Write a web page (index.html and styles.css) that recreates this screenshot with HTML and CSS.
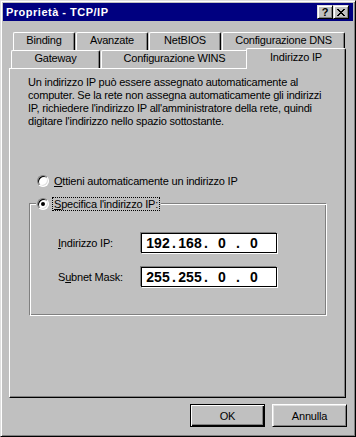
FILE: index.html
```html
<!DOCTYPE html>
<html lang="it">
<head>
<meta charset="utf-8">
<title>Proprietà - TCP/IP</title>
<link rel="stylesheet" href="styles.css">
</head>
<body>
<div class="window">
  <div class="titlebar">
    <span class="title">Proprietà - TCP/IP</span>
    <div class="caption-btns">
      <button class="cap-btn help" type="button">?</button>
      <button class="cap-btn close" type="button" aria-label="Chiudi">
        <svg width="8" height="7" viewBox="0 0 8 7" shape-rendering="crispEdges"><path fill="#000" d="M0 0h2v1H0zM6 0h2v1H6zM1 1h2v1H1zM5 1h2v1H5zM2 2h4v1H2zM3 3h2v1H3zM2 4h4v1H2zM1 5h2v1H1zM5 5h2v1H5zM0 6h2v1H0zM6 6h2v1H6z"/></svg>
      </button>
    </div>
  </div>
  <div class="body">
    <div class="tabs">
      <div class="tabrow back">
        <div class="tab t-binding">Binding</div>
        <div class="tab t-avanzate">Avanzate</div>
        <div class="tab t-netbios">NetBIOS</div>
        <div class="tab t-dns">Configurazione DNS</div>
      </div>
      <div class="tabrow front">
        <div class="tab t-gateway">Gateway</div>
        <div class="tab t-wins">Configurazione WINS</div>
        <div class="tab t-ip sel">Indirizzo IP</div>
      </div>
    </div>
    <div class="panel">
      <p class="intro">Un indirizzo IP può essere assegnato automaticamente al<br>computer. Se la rete non assegna automaticamente gli indirizzi<br>IP, richiedere l'indirizzo IP all'amministratore della rete, quindi<br>digitare l'indirizzo nello spazio sottostante.</p>
      <div class="radio-row">
        <span class="radio"></span>
        <span class="rlabel"><u>O</u>ttieni automaticamente un indirizzo IP</span>
      </div>
      <div class="group">
        <div class="legend">
          <span class="radio checked"></span>
          <span class="rlabel focus"><u>S</u>pecifica l'indirizzo IP:</span>
        </div>
        <div class="field first">
          <span class="flabel"><u>I</u>ndirizzo IP:</span>
          <div class="ipbox"><span class="oct">192</span><span class="dot">.</span><span class="oct">168</span><span class="dot">.</span><span class="oct">0</span><span class="dot">.</span><span class="oct">0</span></div>
        </div>
        <div class="field second">
          <span class="flabel">S<u>u</u>bnet Mask:</span>
          <div class="ipbox"><span class="oct">255</span><span class="dot">.</span><span class="oct">255</span><span class="dot">.</span><span class="oct">0</span><span class="dot">.</span><span class="oct">0</span></div>
        </div>
      </div>
    </div>
    <div class="buttons">
      <button class="btn default" type="button">OK</button>
      <button class="btn" type="button">Annulla</button>
    </div>
  </div>
</div>
</body>
</html>
```
FILE: styles.css
```css
* { box-sizing: border-box; }
html, body { margin: 0; padding: 0; background: #c0c0c0; }
body {
  font-family: "Liberation Sans", Arial, sans-serif;
  font-size: 11px;
  letter-spacing: -0.2px;
  color: #000;
}
.window {
  width: 356px;
  height: 437px;
  background: #c0c0c0;
  border: 1px solid;
  border-color: #dfdfdf #000 #000 #dfdfdf;
  box-shadow: inset 1px 1px #fff, inset -1px -1px #808080;
  padding: 2px;
  display: flex;
  flex-direction: column;
}
.titlebar {
  height: 18px;
  flex: none;
  background: #000080;
  display: flex;
  align-items: center;
  justify-content: space-between;
  padding: 0 4px 0 3px;
}
.title {
  color: #fff;
  font-weight: bold;
  font-size: 11px;
  letter-spacing: 0.5px;
  line-height: 18px;
  white-space: nowrap;
}
.caption-btns { display: flex; }
.cap-btn {
  width: 16px;
  height: 14px;
  padding: 0;
  margin: 0;
  background: #c0c0c0;
  border: 1px solid;
  border-color: #dfdfdf #000 #000 #dfdfdf;
  box-shadow: inset 1px 1px #fff, inset -1px -1px #808080;
  display: flex;
  align-items: center;
  justify-content: center;
  font: bold 11px "Liberation Sans", Arial, sans-serif;
  letter-spacing: 0;
  line-height: 12px;
  color: #000;
}
.cap-btn svg { display: block; }
.body {
  flex: 1;
  padding: 0 6px;
  display: flex;
  flex-direction: column;
}
.tabs {
  margin-top: 11px;
  height: 36px;
  flex: none;
}
.tabrow { display: flex; height: 18px; }
.tabrow.back { padding-left: 4px; }
.tabrow.front { padding-left: 2px; align-items: flex-end; }
.tab {
  height: 18px;
  background: #c0c0c0;
  border-top: 1px solid #fff;
  border-left: 1px solid #fff;
  border-right: 1px solid #000;
  box-shadow: inset -1px 0 #808080;
  border-radius: 2px 2px 0 0;
  text-align: center;
  line-height: 15px;
  white-space: nowrap;
  flex: none;
}
.t-binding { width: 62px; margin-right: 1px; }
.t-avanzate { width: 72px; margin-right: 1px; }
.t-netbios { width: 72px; margin-right: 1px; }
.t-dns { width: 123px; }
.t-gateway { width: 89px; margin-right: 1px; }
.t-wins { width: 147px; }
.tab.sel {
  width: 100px;
  height: 21px;
  margin-left: -2px;
  margin-bottom: -1px;
  padding-top: 1px;
  position: relative;
  z-index: 1;
}
.panel {
  width: 337px;
  height: 330px;
  flex: none;
  border: 1px solid;
  border-color: #fff #000 #000 #fff;
  box-shadow: inset -1px -1px #808080;
  padding: 7px 0 0 18px;
}
.intro {
  margin: 0;
  line-height: 13px;
  white-space: nowrap;
}
.radio-row {
  display: flex;
  align-items: center;
  height: 14px;
  margin: 46px 0 0 9px;
}
.radio {
  width: 12px;
  height: 12px;
  flex: none;
  border-radius: 50%;
  background: #fff;
  border: 1px solid;
  border-color: #808080 #fff #fff #808080;
  box-shadow: inset 1px 1px #000, inset -1px -1px #dfdfdf;
  display: flex;
  align-items: center;
  justify-content: center;
}
.radio.checked::after {
  content: "";
  width: 4px;
  height: 4px;
  border-radius: 50%;
  background: #000;
}
.rlabel {
  margin-left: 3px;
  padding: 0 1px;
  border: 1px solid transparent;
  line-height: 12px;
  white-space: nowrap;
}
.rlabel.focus { border: 1px dotted #000; }
.group {
  width: 298px;
  margin: 15px 0 0 1px;
  border: 1px solid;
  border-color: #808080 #fff #fff #808080;
  box-shadow: inset 1px 1px #fff, inset -1px -1px #808080;
  padding: 0 0 28px 0;
}
.legend {
  display: flex;
  align-items: center;
  width: max-content;
  height: 14px;
  margin: -7px 0 0 6px;
  padding: 0 1px;
  background: #c0c0c0;
}
.field {
  display: flex;
  align-items: center;
  height: 20px;
  margin-left: 28px;
}
.field.first { margin-top: 22px; }
.field.second { margin-top: 14px; }
.flabel { width: 83px; white-space: nowrap; }
.ipbox {
  width: 136px;
  height: 20px;
  background: #fff;
  border: 1px solid #000;
  box-shadow: -1px -1px 0 #808080, 1px 1px 0 #fff;
  display: flex;
  padding-left: 4px;
  font: bold 14px "Liberation Sans", Arial, sans-serif;
  letter-spacing: 0;
  line-height: 18px;
}
.oct { width: 24px; text-align: center; }
.dot { width: 8px; text-align: center; }
.buttons {
  display: flex;
  justify-content: flex-end;
  gap: 7px;
  margin-top: 6px;
}
.btn {
  width: 75px;
  height: 23px;
  padding: 0;
  margin: 0;
  background: #c0c0c0;
  color: #000;
  font: 11px "Liberation Sans", Arial, sans-serif;
  letter-spacing: -0.2px;
  border: 1px solid;
  border-color: #fff #000 #000 #fff;
  box-shadow: inset 1px 1px #dfdfdf, inset -1px -1px #808080;
}
.btn.default {
  border: 1px solid #000;
  box-shadow: inset 1px 1px #fff, inset -1px -1px #000, inset -2px -2px #808080;
}
```
